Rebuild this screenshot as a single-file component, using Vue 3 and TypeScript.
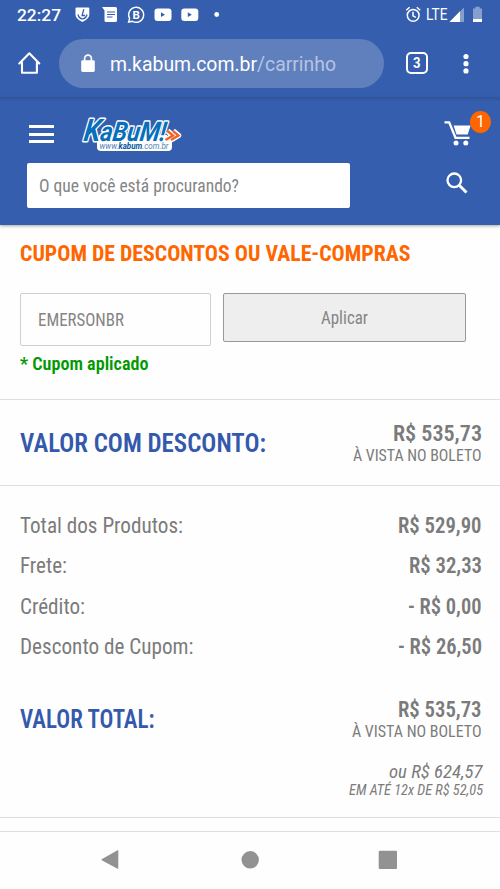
<script setup lang="ts">
import { h } from 'vue'

interface FitProps { t: string; w: number; s: number; b?: number }

// Condensed label: real text fitted to a fixed advance, baseline 18px from the top.
const Fit = (p: FitProps) =>
  h('svg', { width: p.w, height: 24, viewBox: `0 0 ${p.w} 24`, style: { fontSize: `${p.s}px`, fontWeight: p.b ?? 400 } }, [
    h('text', { x: 0, y: 18, textLength: p.w, lengthAdjust: 'spacingAndGlyphs', fill: 'currentColor' }, p.t),
  ])
Fit.props = ['t', 'w', 's', 'b']

const rows = [
  { label: 'Total dos Produtos:', lw: 163, value: 'R$ 529,90', vw: 83.5 },
  { label: 'Frete:', lw: 47, value: 'R$ 32,33', vw: 73 },
  { label: 'Crédito:', lw: 65, value: '- R$ 0,00', vw: 73.5 },
  { label: 'Desconto de Cupom:', lw: 173.5, value: '- R$ 26,50', vw: 84 },
]
</script>

<template>
  <div class="screen">
    <div class="status">
      <Fit class="clock" t="22:27" :w="44" :s="17" :b="500" />
      <svg class="notes" width="150" height="18" viewBox="75 6 150 18">
        <path d="M76.5 7.5h11.8q1 0 1 1v6.3q0 4-6.9 7.2-6.9-3.200-6.900-7.200V8.500q0-1 1-1z" fill="#fff" />
        <path d="M83.800 9.200l-1.700 6.300h3M78 14.500q1 4.300 4.500 4.300t4.500-4.300" fill="none" stroke="#355eae" stroke-width="1.300" />
        <path d="M102 7h13.500q1.500 0 1.500 1.500V20.500q0 1.500-1.500 1.500h-9.500q-1.500 0-1.500-1.500V10.500z" fill="#fff" />
        <path d="M107 12h8M107 14.500h8M107 17h5.500" stroke="#355eae" stroke-width="1.100" />
        <path d="M128.600 22l1-3.600A7.500 7.500 0 1 1 132.500 21.300z" fill="none" stroke="#fff" stroke-width="1.400" />
        <text x="132.400" y="18.600" font-size="11.500" font-weight="700" fill="#fff">B</text>
        <rect x="154.500" y="8.500" width="17" height="12.400" rx="3" fill="#fff" />
        <path d="M161 12.300v4.800l4-2.400z" fill="#355eae" />
        <rect x="181.300" y="8.500" width="17" height="12.400" rx="3" fill="#fff" />
        <path d="M187.800 12.300v4.800l4-2.400z" fill="#355eae" />
        <circle cx="216.700" cy="14.500" r="2.400" fill="#fff" />
      </svg>
      <svg class="alarm" width="16" height="18" viewBox="405 6 16 18" fill="none" stroke="#fff" stroke-width="1.500">
        <circle cx="413.200" cy="15.300" r="5.900" />
        <path d="M413 11.800v4l2.800 1.600M406.200 10.200l3.400-2.900M420.200 10.200l-3.400-2.900" />
      </svg>
      <Fit class="lte" t="LTE" :w="21.500" :s="15.800" />
      <svg class="signal" width="36" height="18" viewBox="448 6 36 18">
        <path d="M464 7.500V22h-14.500z" fill="#859fcf" />
        <path d="M460 11.200V22h-10.500z" fill="#fff" />
        <path d="M473 8.500h2.300V6.800h4.400v1.700h2.300V22h-9z" fill="#859fcf" />
        <path d="M473 19h9v3h-9z" fill="#fff" />
      </svg>
    </div>

    <div class="browser">
      <svg class="home" width="24" height="24" viewBox="0 0 24 24" fill="none" stroke="#fff" stroke-width="2.100" stroke-linejoin="round" stroke-linecap="round">
        <path d="M2.300 12.500L12.300 2.300l10 10.200M5 11.500v10.300h14.900V11.500" />
      </svg>
      <div class="pill">
        <svg width="14" height="19" viewBox="0 0 14 19">
          <rect x=".200" y="6.200" width="13.600" height="11.800" rx="1.400" fill="#fff" />
          <path d="M3.600 7V4.500a3.400 3.400 0 0 1 6.800 0V7" fill="none" stroke="#fff" stroke-width="1.700" />
        </svg>
        <Fit class="host" t="m.kabum.com.br" :w="147" :s="19.500" />
        <Fit class="path" t="/carrinho" :w="79" :s="19.500" />
      </div>
      <div class="tabs"><Fit t="3" :w="7.500" :s="14" :b="700" /></div>
      <svg class="dots" width="6" height="22" viewBox="0 0 6 22" fill="#fff">
        <circle cx="3" cy="3.500" r="2.600" /><circle cx="3" cy="10.700" r="2.600" /><circle cx="3" cy="17.900" r="2.600" />
      </svg>
    </div>

    <header class="site">
      <div class="brand">
        <div class="burger"><i></i><i></i><i></i></div>
        <svg class="logo" width="106" height="42" viewBox="78 112 106 42" font-style="italic">
          <rect x="97" y="138" width="75" height="13" rx="4" fill="#fff" />
          <path d="M99 135h68v6H99z" fill="#fff" />
          <path d="M167.500 131l5.500 4.500-7.500 4.500M173 131l5.500 4.500-7.500 4.500" fill="none" stroke="#fff" stroke-width="5.500" stroke-linejoin="round" />
          <g transform="translate(83 140.500) skewX(-8)">
            <text class="mark" x="0" y="0" textLength="82" lengthAdjust="spacingAndGlyphs"><tspan font-size="31">K</tspan>aBuM!</text>
          </g>
          <path d="M167.500 131l5.500 4.500-7.500 4.500M173 131l5.500 4.500-7.500 4.500" fill="none" stroke="#f0642a" stroke-width="2.400" />
          <text class="domain" x="99.500" y="149" textLength="69" lengthAdjust="spacingAndGlyphs">www.<tspan class="name">kabum</tspan>.com.br</text>
        </svg>
        <div class="cart">
          <svg width="28" height="27" viewBox="0 0 28 27">
            <path d="M.500 2.300h4.700l6.300 15.500h14" fill="none" stroke="#fff" stroke-width="2.300" />
            <path d="M9.600 5.500h17l-2.900 9H12.500z" fill="#fff" />
            <circle cx="12" cy="23" r="2.500" fill="#fff" /><circle cx="21.800" cy="23" r="2.500" fill="#fff" />
          </svg>
          <span class="badge">1</span>
        </div>
      </div>
      <div class="search">
        <div class="field"><Fit t="O que você está procurando?" :w="200" :s="17.500" /></div>
        <svg width="24" height="24" viewBox="0 0 24 24" fill="none" stroke="#fff">
          <circle cx="9.300" cy="9.300" r="6.800" stroke-width="2.300" />
          <path d="M14.200 14.200l7.300 7.300" stroke-width="2.900" />
        </svg>
      </div>
    </header>

    <main>
      <section class="coupon">
        <Fit class="orange" t="CUPOM DE DESCONTOS OU VALE-COMPRAS" :w="390.500" :s="21.300" :b="700" />
        <div class="form">
          <div class="code"><Fit t="EMERSONBR" :w="86" :s="17.500" /></div>
          <div class="apply"><Fit t="Aplicar" :w="47" :s="17.500" /></div>
        </div>
        <Fit class="green" t="* Cupom aplicado" :w="128.500" :s="18.300" :b="600" />
      </section>

      <section class="sum discount">
        <Fit class="blue" t="VALOR COM DESCONTO:" :w="246" :s="26" :b="600" />
        <div class="amount">
          <Fit t="R$ 535,73" :w="89" :s="22.500" :b="600" />
          <Fit class="sub" t="À VISTA NO BOLETO" :w="128.500" :s="16.800" />
        </div>
      </section>

      <section class="details">
        <div v-for="r in rows" :key="r.label" class="row">
          <Fit :t="r.label" :w="r.lw" :s="22" />
          <Fit :t="r.value" :w="r.vw" :s="22" :b="600" />
        </div>
        <div class="sum total">
          <Fit class="blue" t="VALOR TOTAL:" :w="134.500" :s="25" :b="600" />
          <div class="amount">
            <Fit t="R$ 535,73" :w="83.500" :s="22" :b="600" />
            <Fit class="sub" t="À VISTA NO BOLETO" :w="129.500" :s="16.800" />
          </div>
        </div>
        <div class="parcel">
          <Fit t="ou R$ 624,57" :w="93.500" :s="18.800" />
          <Fit class="small" t="EM ATÉ 12x DE R$ 52,05" :w="134" :s="14.800" />
        </div>
      </section>
      <div class="gap"></div>
    </main>

    <nav>
      <svg width="20" height="22" viewBox="0 0 20 22"><path d="M1.700 10.300L17.500 1.300q.800-.300.800.500v17.500q0 .800-.800.400L1.700 11.200q-.800-.400 0-.900z" /></svg>
      <svg width="20" height="22" viewBox="0 0 20 22"><circle cx="11.200" cy="10.800" r="8.700" /></svg>
      <svg width="20" height="22" viewBox="0 0 20 22"><rect x=".700" y="1.700" width="18.300" height="18.300" rx="1.200" /></svg>
    </nav>
  </div>
</template>

<style>
body { margin: 0; background: #fefefe; }
</style>

<style scoped>
.screen { width: 500px; height: 889px; overflow: hidden; display: flex; flex-direction: column; background: #fefefe; color: #7b7b7b; font-family: "Roboto Condensed", Roboto, sans-serif; }
* { box-sizing: border-box; }
svg { display: block; flex: none; overflow: visible; }
.status { height: 30px; flex: none; background: #355eae; color: #fff; display: flex; align-items: flex-start; padding: 6px 16px 0 16.500px; font-family: Roboto, sans-serif; }
.clock { margin-top: -3px; }
.notes { margin-left: 14.500px; }
.alarm { margin-left: 180px; }
.lte { margin: -4px 0 0 4.500px; }
.signal { margin-left: 1px; }
.browser { height: 67px; flex: none; background: #355eae; color: #fff; display: flex; align-items: center; padding-left: 17px; font-family: Roboto, sans-serif; }
.home { margin-top: -1px; }
.pill { width: 325px; height: 48.500px; margin-left: 17.500px; border-radius: 25px; background: #6080bd; display: flex; align-items: center; padding-left: 22px; }
.host { margin: 2px 0 0 15.500px; }
.path { color: #b5c5e2; margin-top: 2px; }
.tabs { width: 22px; height: 22px; margin-left: 22.500px; margin-top: -1px; border: 2.200px solid #fff; border-radius: 5px; display: flex; align-items: center; justify-content: center; padding-bottom: 1.500px; }
.dots { margin-left: 34.500px; }
.site { height: 128px; flex: none; position: relative; background: linear-gradient(#2f549c, #355eae 5px); box-shadow: 0 1px 3px rgba(70, 90, 70, .5); color: #fff; padding: 15px 0 0 27px; }
.brand { height: 51px; display: flex; }
.burger { width: 25px; margin: 13px 0 0 2px; display: flex; flex-direction: column; gap: 4.600px; }
.burger i { height: 3px; background: #fff; }
.logo { margin-left: 24px; font-family: Roboto, sans-serif; }
.mark { font-size: 27px; font-weight: 700; fill: #0870ba; stroke: #fff; stroke-width: 3px; stroke-linejoin: round; paint-order: stroke; }
.domain { font-size: 9px; fill: #5380b5; }
.name { font-weight: 700; fill: #0758a1; }
.cart { position: relative; margin: 8px 0 0 260px; }
.badge { position: absolute; left: 26px; top: -9px; width: 21px; height: 22px; border-radius: 50%; background: #f60; text-align: center; font: 16px/22px Roboto, sans-serif; }
.search { display: flex; align-items: flex-start; }
.search > svg { margin: 8px 0 0 95px; }
.field { width: 323px; height: 44.500px; background: #fff; border-radius: 2px; color: #858585; padding: 11px 0 0 11.500px; }
.coupon { height: 174.500px; padding: 18px 0 0 19.500px; border-bottom: 1px solid #dedede; }
.orange { color: #f60; }
.form { display: flex; align-items: flex-start; gap: 12px; margin-top: 25.800px; }
.code, .apply { border: 1px solid #cfcfcf; border-radius: 2px; color: #858585; }
.code { width: 191px; height: 53px; padding: 14px 0 0 17px; }
.apply { width: 243.500px; height: 49px; background: #eee; border-color: #999; display: flex; justify-content: center; padding-top: 12px; }
.green { color: #090; margin-top: 6.500px; }
.sum { display: flex; justify-content: space-between; }
.sum, .details { padding-left: 19.500px; padding-right: 18.500px; }
.blue { color: #3459ac; }
.amount { display: flex; flex-direction: column; align-items: flex-end; }
.sub { margin-top: -3.300px; }
.discount { height: 86px; border-bottom: 1px solid #dedede; padding-top: 23px; }
.discount .blue { margin-top: 11px; }
.details { height: 332px; border-bottom: 1px solid #dedede; padding-top: 29.500px; }
.row { height: 40.300px; display: flex; justify-content: space-between; }
.sum.total { padding: 0; margin-top: 23.300px; }
.total .blue { margin-top: 10.400px; }
.total .sub { margin-top: -4.300px; }
.parcel { display: flex; flex-direction: column; align-items: flex-end; font-style: italic; margin: 16.500px -1px 0 0; }
.small { margin-top: -7.200px; }
.gap { height: 14px; border-bottom: 1px solid #dedede; }
nav { flex: 1; display: flex; justify-content: space-between; padding: 17px 102px 0 100px; }
nav svg { fill: #929292; }
</style>
